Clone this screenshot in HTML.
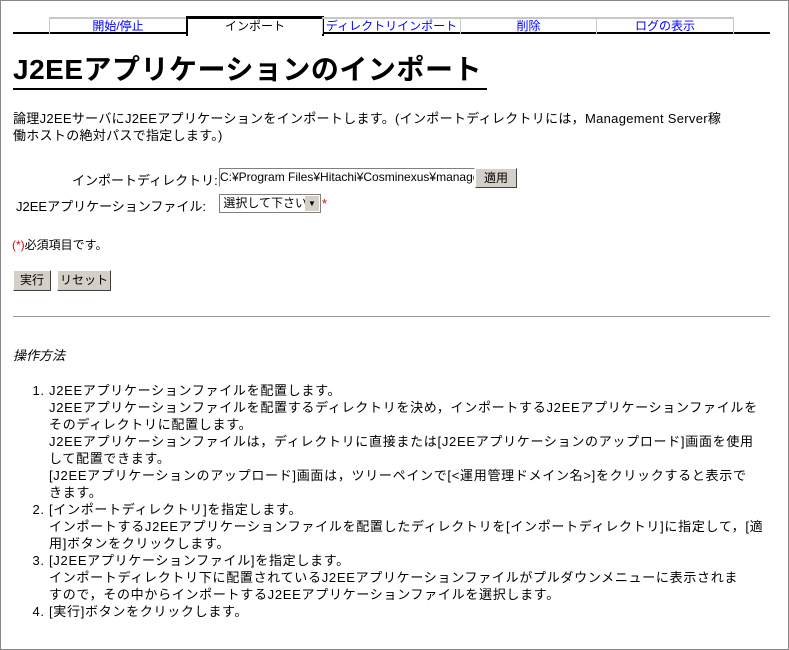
<!DOCTYPE html>
<html><head><meta charset="utf-8"><style>
body{margin:0;width:789px;height:650px;overflow:hidden;background:#fff;font-family:"Liberation Sans","Noto Sans CJK JP",sans-serif;font-size:13px;color:#000}
.frame{position:absolute;left:0;top:0;width:787px;height:648px;border:1px solid #888}
.a{position:absolute;white-space:nowrap}
.tab{position:absolute;top:17px;height:15px;border-top:2px solid #c8c8c8;border-left:1px solid #c8c8c8;border-right:1px solid #c8c8c8;text-align:center;color:#00f;font-size:12px;line-height:15px;white-space:nowrap;overflow:hidden}
.btn{position:absolute;top:270px;height:19px;background:#d4d0c8;border:1px solid;border-color:#fff #404040 #404040 #fff;font-size:12px;line-height:19px;text-align:center}
ol{position:absolute;left:13px;top:382px;margin:0;padding-left:36px;width:740px;line-height:17px;font-size:13px;white-space:nowrap;letter-spacing:0.7px}
ol li{margin:0}
</style></head><body>
<div class="frame"></div>
<div class="a" style="left:13px;top:32px;width:757px;height:2px;background:#000"></div>
<div class="tab" style="left:49px;width:136px">開始/停止</div>
<div class="tab" style="left:186px;width:134px;border-top:3px solid #000;border-left:2px solid #000;border-right:2px solid #000;top:16px;height:17px;background:#fff;color:#000">インポート</div>
<div class="tab" style="left:322px;width:137px">ディレクトリインポート</div>
<div class="tab" style="left:460px;width:135px">削除</div>
<div class="tab" style="left:596px;width:136px">ログの表示</div>
<div class="a" style="left:13px;top:52px;font-size:28px;font-weight:bold;line-height:36px;border-bottom:2px solid #000;width:474px;letter-spacing:0.5px">J2EEアプリケーションのインポート</div>
<div class="a" style="left:13px;top:110px;line-height:17px;letter-spacing:0.3px">論理J2EEサーバにJ2EEアプリケーションをインポートします。(インポートディレクトリには，Management Server稼<br>働ホストの絶対パスで指定します。)</div>
<div class="a" style="left:72px;top:170px">インポートディレクトリ:</div>
<div class="a" style="left:219px;top:168px;width:254px;height:17px;border:1px solid;border-color:#808080 #fff #fff #808080;font-size:12px;line-height:17px;overflow:hidden">C:¥Program Files¥Hitachi¥Cosminexus¥manager</div>
<div class="a" style="left:475px;top:168px;width:40px;height:18px;background:#d4d0c8;border:1px solid;border-color:#fff #404040 #404040 #fff;text-align:center;line-height:18px;font-size:12px">適用</div>
<div class="a" style="left:16px;top:196px">J2EEアプリケーションファイル:</div>
<div class="a" style="left:219px;top:194px;width:100px;height:17px;border:1px solid #808080;font-size:12px;line-height:17px">&nbsp;選択して下さい<span style="position:absolute;right:1px;top:1px;width:14px;height:15px;background:#d4d0c8;font-size:8px;text-align:center;line-height:15px">▼</span></div>
<div class="a" style="left:322px;top:196px;color:#e00">*</div>
<div class="a" style="left:12px;top:236px;font-size:12px"><span style="color:#e00">(*)</span>必須項目です。</div>
<div class="btn" style="left:13px;width:36px">実行</div>
<div class="btn" style="left:57px;width:52px">リセット</div>
<div class="a" style="left:13px;top:316px;width:757px;height:1px;background:#999"></div>
<div class="a" style="left:13px;top:345px;font-style:italic">操作方法</div>
<ol>
<li>J2EEアプリケーションファイルを配置します。<br>J2EEアプリケーションファイルを配置するディレクトリを決め，インポートするJ2EEアプリケーションファイルを<br>そのディレクトリに配置します。<br>J2EEアプリケーションファイルは，ディレクトリに直接または[J2EEアプリケーションのアップロード]画面を使用<br>して配置できます。<br>[J2EEアプリケーションのアップロード]画面は，ツリーペインで[&lt;運用管理ドメイン名&gt;]をクリックすると表示で<br>きます。</li>
<li>[インポートディレクトリ]を指定します。<br>インポートするJ2EEアプリケーションファイルを配置したディレクトリを[インポートディレクトリ]に指定して，[適<br>用]ボタンをクリックします。</li>
<li>[J2EEアプリケーションファイル]を指定します。<br>インポートディレクトリ下に配置されているJ2EEアプリケーションファイルがプルダウンメニューに表示されま<br>すので，その中からインポートするJ2EEアプリケーションファイルを選択します。</li>
<li>[実行]ボタンをクリックします。</li>
</ol>
</body></html>
